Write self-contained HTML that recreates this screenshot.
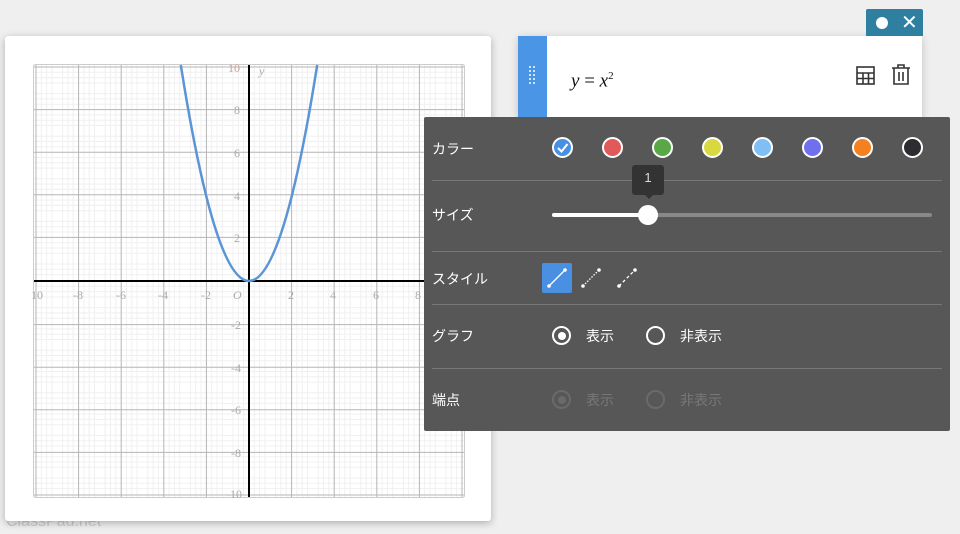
<!DOCTYPE html>
<html><head><meta charset="utf-8"><style>
*{margin:0;padding:0;box-sizing:border-box}
body{width:960px;height:534px;background:#efefef;position:relative;overflow:hidden;font-family:"Liberation Sans","Noto Sans CJK JP",sans-serif}
.card{position:absolute;left:5px;top:36px;width:486px;height:485px;background:#fff;border-radius:3px;box-shadow:0 2px 8px rgba(0,0,0,.28)}
.wm{position:absolute;left:6px;top:513px;font-size:16px;color:#ccc}
.eq{position:absolute;left:518px;top:36px;width:404px;height:82px;background:#fff;box-shadow:0 2px 8px rgba(0,0,0,.2)}
.strip{position:absolute;left:0;top:0;width:29px;height:82px;background:#4a95e6}
.badge{position:absolute;left:866px;top:9px;width:57px;height:27px;background:#2f7fa0;border-radius:2px 2px 0 0}
.panel{position:absolute;left:424px;top:117px;width:526px;height:314px;background:#575757;border-radius:2px;color:#fff;font-size:14px}
.lbl{position:absolute;left:8px}
.hr{position:absolute;left:8px;right:8px;height:1px;background:#777}
.dot{position:absolute;width:21px;height:21px;border-radius:50%;border:2px solid #fff;top:20px}
</style></head><body>
<div class="wm">ClassPad.net</div>
<div class="card"></div>
<svg style="position:absolute;left:0;top:0" width="500" height="534">
<rect x="33.5" y="64.5" width="431" height="433" fill="#fff" stroke="#ccc" rx="2"/>
<g stroke="#f0f0f0" stroke-width="1">
<path d="M41.3 65V497M46.6 65V497M51.9 65V497M62.6 65V497M67.9 65V497M73.2 65V497M83.9 65V497M89.2 65V497M94.5 65V497M105.2 65V497M110.5 65V497M115.8 65V497M126.5 65V497M131.8 65V497M137.1 65V497M147.8 65V497M153.1 65V497M158.4 65V497M169.1 65V497M174.4 65V497M179.7 65V497M190.4 65V497M195.7 65V497M201 65V497M211.7 65V497M217 65V497M222.3 65V497M233 65V497M238.3 65V497M243.6 65V497M254.3 65V497M259.6 65V497M264.9 65V497M275.6 65V497M280.9 65V497M286.2 65V497M296.9 65V497M302.2 65V497M307.5 65V497M318.2 65V497M323.5 65V497M328.8 65V497M339.5 65V497M344.8 65V497M350.1 65V497M360.8 65V497M366.1 65V497M371.4 65V497M382.1 65V497M387.4 65V497M392.7 65V497M403.4 65V497M408.7 65V497M414 65V497M424.7 65V497M430 65V497M435.3 65V497M446 65V497M451.3 65V497M456.6 65V497"/>
<path d="M34 72.3H464M34 77.6H464M34 82.9H464M34 93.6H464M34 98.9H464M34 104.2H464M34 114.9H464M34 120.2H464M34 125.5H464M34 136.2H464M34 141.5H464M34 146.8H464M34 157.5H464M34 162.8H464M34 168.1H464M34 178.8H464M34 184.1H464M34 189.4H464M34 200.1H464M34 205.4H464M34 210.7H464M34 221.4H464M34 226.7H464M34 232H464M34 242.7H464M34 248H464M34 253.3H464M34 264H464M34 269.3H464M34 274.6H464M34 286.3H464M34 291.6H464M34 296.9H464M34 307.6H464M34 312.9H464M34 318.2H464M34 328.9H464M34 334.2H464M34 339.5H464M34 350.2H464M34 355.5H464M34 360.8H464M34 371.5H464M34 376.8H464M34 382.1H464M34 392.8H464M34 398.1H464M34 403.4H464M34 414.1H464M34 419.4H464M34 424.7H464M34 435.4H464M34 440.7H464M34 446H464M34 456.7H464M34 462H464M34 467.3H464M34 478H464M34 483.3H464M34 488.6H464"/>
</g>
<g stroke="#b5b5b5" stroke-width="1">
<path d="M36 65V497M78.6 65V497M121.2 65V497M163.8 65V497M206.4 65V497M291.6 65V497M334.2 65V497M376.8 65V497M419.4 65V497M462 65V497"/>
<path d="M34 67H464M34 109.6H464M34 152.2H464M34 194.8H464M34 237.4H464M34 324.6H464M34 367.2H464M34 409.8H464M34 452.4H464M34 495H464"/>
</g>
<path d="M34 281H464M249 65V497" stroke="#000" stroke-width="2"/>
<path d="M180.8 65 Q249 497 317.2 65" fill="none" stroke="#5b95d5" stroke-width="2.5"/>
<g font-family="Liberation Serif" font-size="12" fill="#aaa">
<text x="31" y="299">10</text><text x="73" y="299">-8</text><text x="116" y="299">-6</text><text x="158" y="299">-4</text><text x="201" y="299">-2</text><text x="233" y="299" font-style="italic">O</text><text x="288" y="299">2</text><text x="330" y="299">4</text><text x="373" y="299">6</text><text x="415" y="299">8</text>
<text x="228" y="72" fill="#c9a08a">10</text><text x="234" y="114">8</text><text x="234" y="157">6</text><text x="234" y="200">4</text><text x="234" y="242">2</text><text x="231" y="329">-2</text><text x="231" y="372">-4</text><text x="231" y="414">-6</text><text x="231" y="457">-8</text><text x="226" y="498">-10</text>
<text x="259" y="75" font-style="italic">y</text>
</g>
<path d="M518 76 Q504 78 503 100 V118" fill="none" stroke="#999" stroke-width="1.2"/>
</svg>
<div class="eq"><div class="strip">
<svg width="29" height="82"><g fill="#cfe3fa"><rect x="11" y="30" width="2" height="2"/><rect x="15" y="30" width="2" height="2"/><rect x="11" y="34" width="2" height="2"/><rect x="15" y="34" width="2" height="2"/><rect x="11" y="38" width="2" height="2"/><rect x="15" y="38" width="2" height="2"/><rect x="11" y="42" width="2" height="2"/><rect x="15" y="42" width="2" height="2"/><rect x="11" y="46" width="2" height="2"/><rect x="15" y="46" width="2" height="2"/></g></svg></div>
<div style="position:absolute;left:53px;top:34px;font-family:'Liberation Serif',serif;font-size:19px;font-style:italic;color:#111">y <span style="font-style:normal">=</span> x<sup style="font-size:11px;font-style:normal">2</sup></div>
<svg style="position:absolute;left:338px;top:30px" width="20" height="20" fill="none" stroke="#333" stroke-width="1.6"><rect x="1" y="1" width="17" height="17"/><path d="M1 7H18M1 12.5H18M7 7V18M12.5 7V18"/></svg>
<svg style="position:absolute;left:373px;top:28px" width="20" height="22" fill="none" stroke="#333" stroke-width="1.6"><path d="M1 4H19M7 4V1H13V4M3 4V20H17V4M8 8V17M12 8V17"/></svg>
</div>
<div class="badge"><div style="position:absolute;left:10px;top:8px;width:12px;height:12px;border-radius:50%;background:#fff"></div><div style="position:absolute;left:35px;top:1px;color:#fff;font-size:20px">✕</div></div>
<div class="panel">
<div class="lbl" style="top:22px">カラー</div>
<div class="dot" style="left:128px;background:#4a90e2"><svg width="17" height="17" style="position:absolute;left:0;top:0"><path d="M4 9L7.5 12.5L13.5 5" stroke="#fff" stroke-width="2" fill="none"/></svg></div>
<div class="dot" style="left:178px;background:#e05a5a"></div>
<div class="dot" style="left:228px;background:#5aa845"></div>
<div class="dot" style="left:278px;background:#d8d840"></div>
<div class="dot" style="left:328px;background:#7fbff5"></div>
<div class="dot" style="left:378px;background:#7070ee"></div>
<div class="dot" style="left:428px;background:#f58020"></div>
<div class="dot" style="left:478px;background:#2b2d30"></div>
<div class="hr" style="top:63px"></div>
<div style="position:absolute;left:208px;top:48px;width:32px;height:30px;background:#333;border-radius:3px;color:#ddd;font-size:13px;text-align:center;line-height:26px">1</div>
<div style="position:absolute;left:220px;top:77px;border:5px solid transparent;border-top-color:#333;border-bottom:0"></div>
<div class="lbl" style="top:88px">サイズ</div>
<div style="position:absolute;left:128px;top:96px;width:380px;height:4px;background:#888;border-radius:2px"></div>
<div style="position:absolute;left:128px;top:96px;width:96px;height:4px;background:#fff;border-radius:2px"></div>
<div style="position:absolute;left:214px;top:88px;width:20px;height:20px;border-radius:50%;background:#fff"></div>
<div class="hr" style="top:134px"></div>
<div class="lbl" style="top:152px">スタイル</div>
<div style="position:absolute;left:118px;top:146px;width:30px;height:30px;background:#4a90e2;border-radius:2px"></div>
<svg style="position:absolute;left:118px;top:146px" width="100" height="30" stroke="#fff" fill="#fff"><path d="M7 23L23 7" stroke-width="1.3"/><circle cx="7" cy="23" r="1.3"/><circle cx="23" cy="7" r="1.3"/><path d="M41 23L57 7" stroke-width="1.3" stroke-dasharray="1.5 1.5"/><circle cx="41" cy="23" r="1.3"/><circle cx="57" cy="7" r="1.3"/><path d="M77 23L93 7" stroke-width="1.3" stroke-dasharray="3 2.5"/><circle cx="77" cy="23" r="1.3"/><circle cx="93" cy="7" r="1.3"/></svg>
<div class="hr" style="top:187px"></div>
<div class="lbl" style="top:209px">グラフ</div>
<div style="position:absolute;left:128px;top:209px;width:19px;height:19px;border-radius:50%;border:2px solid #fff"><div style="position:absolute;left:3.5px;top:3.5px;width:8px;height:8px;border-radius:50%;background:#fff"></div></div>
<div style="position:absolute;left:162px;top:209px">表示</div>
<div style="position:absolute;left:222px;top:209px;width:19px;height:19px;border-radius:50%;border:2px solid #fff"></div>
<div style="position:absolute;left:256px;top:209px">非表示</div>
<div class="hr" style="top:251px"></div>
<div class="lbl" style="top:273px">端点</div>
<div style="position:absolute;left:128px;top:273px;width:19px;height:19px;border-radius:50%;border:2px solid #6a6a6a"><div style="position:absolute;left:3.5px;top:3.5px;width:8px;height:8px;border-radius:50%;background:#6a6a6a"></div></div>
<div style="position:absolute;left:162px;top:273px;color:#777">表示</div>
<div style="position:absolute;left:222px;top:273px;width:19px;height:19px;border-radius:50%;border:2px solid #6a6a6a"></div>
<div style="position:absolute;left:256px;top:273px;color:#777">非表示</div>
</div>
</body></html>
